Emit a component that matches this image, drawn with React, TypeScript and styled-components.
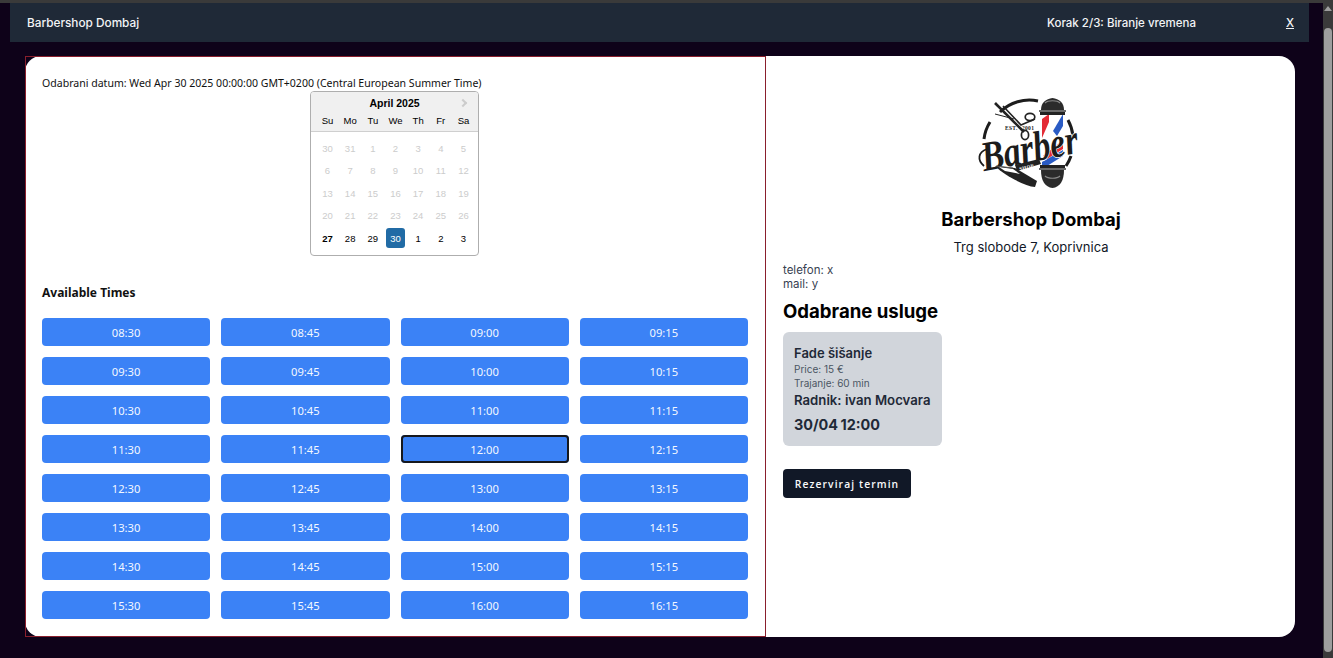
import React, { ReactElement } from "react";
import styled, { createGlobalStyle } from "styled-components";

const GlobalStyle = createGlobalStyle`
  html, body {
    margin: 0;
    padding: 0;
    height: 100%;
    overflow: hidden;
    background: #0e0219;
  }
  * {
    box-sizing: border-box;
  }
`;

const times = [
  "08:30", "08:45", "09:00", "09:15",
  "09:30", "09:45", "10:00", "10:15",
  "10:30", "10:45", "11:00", "11:15",
  "11:30", "11:45", "12:00", "12:15",
  "12:30", "12:45", "13:00", "13:15",
  "13:30", "13:45", "14:00", "14:15",
  "14:30", "14:45", "15:00", "15:15",
  "15:30", "15:45", "16:00", "16:15",
];

const dayNames = ["Su", "Mo", "Tu", "We", "Th", "Fr", "Sa"];

const days = [
  30, 31, 1, 2, 3, 4, 5,
  6, 7, 8, 9, 10, 11, 12,
  13, 14, 15, 16, 17, 18, 19,
  20, 21, 22, 23, 24, 25, 26,
  27, 28, 29, 30, 1, 2, 3,
];

function Logo() {
  return (
    <LogoSvg width="112" height="98" viewBox="0 0 112 98">
      <defs>
        <clipPath id="pole">
          <rect x="67" y="23" width="21" height="50" />
        </clipPath>
      </defs>
      {/* ring */}
      <path d="M25 20 A42 42 0 0 1 63 9" fill="none" stroke="#1c1c1c" strokeWidth="3" />
      <path d="M9 47 A42 42 0 0 1 15 30" fill="none" stroke="#1c1c1c" strokeWidth="3" />
      <path d="M93 28 A42 42 0 0 1 98 44" fill="none" stroke="#1c1c1c" strokeWidth="3" />
      <path d="M96 64 A42 42 0 0 1 91 74" fill="none" stroke="#1c1c1c" strokeWidth="3" />
      {/* scissors */}
      <path d="M20 11 L49 40" stroke="#222" strokeWidth="2.6" />
      <path d="M28 14 L46 33 L60 27" fill="none" stroke="#222" strokeWidth="1.6" />
      <path d="M20 22 L39 27" stroke="#222" strokeWidth="1" />
      <ellipse cx="55" cy="25" rx="4.8" ry="3.6" fill="none" stroke="#222" strokeWidth="1.7" />
      <ellipse cx="50" cy="43" rx="3.6" ry="4.6" fill="none" stroke="#222" strokeWidth="1.7" />
      <text x="30" y="38" fontFamily="'Liberation Serif', serif" fontSize="5.5" fontWeight="700" fill="#222" letterSpacing="0.3">
        EST.
      </text>
      <text x="47" y="38" fontFamily="'Liberation Serif', serif" fontSize="5.5" fontWeight="700" fill="#222" letterSpacing="0.3">
        2001
      </text>
      {/* barber pole */}
      <path d="M66 18 C66 10 71 7 77.5 6 C84 7 89 10 89 18 Z" fill="#2b2b2b" />
      <path d="M70 11 C73 8 82 8 85 11" fill="none" stroke="#8a8a8a" strokeWidth="1.2" />
      <rect x="64" y="18" width="27" height="2" fill="#6a6a6a" />
      <rect x="65" y="20" width="25" height="3" fill="#222" />
      <rect x="67" y="23" width="21" height="50" fill="#fff" />
      <g clipPath="url(#pole)">
        <path d="M67 27 L74 22 L74 30 L67 46 Z" fill="#e32b35" />
        <path d="M78 39 L88 22 L88 34 L82 44 Z" fill="#2a5bc4" />
        <path d="M68 64 L88 48 L88 57 L72 67 Z" fill="#e32b35" />
        <path d="M67 70 L88 58 L88 64 L72 74 L67 74 Z" fill="#2a5bc4" />
      </g>
      <rect x="65" y="73" width="25" height="3" fill="#222" />
      <rect x="64" y="76" width="27" height="2" fill="#6a6a6a" />
      <path d="M66 78 L89 78 C89 89 85 95 77.5 96 C70 95 66 89 66 78 Z" fill="#2b2b2b" />
      <path d="M70 84 C73 87 82 87 85 84" fill="none" stroke="#8a8a8a" strokeWidth="1.2" />
      {/* wordmark */}
      <text
        x="6"
        y="71"
        fontFamily="'Liberation Serif', serif"
        fontSize="42"
        fontWeight="700"
        fontStyle="italic"
        fill="#1c1c1c"
        stroke="#fff"
        strokeWidth="1.4"
        paintOrder="stroke"
        textLength="98"
        lengthAdjust="spacingAndGlyphs"
        transform="rotate(-11 50 60)"
      >
        Barber
      </text>
      <path d="M9 74 C2 68 3 60 12 57" fill="none" stroke="#1c1c1c" strokeWidth="1.8" />
      {/* shop ribbon and razor */}
      <path d="M40 73 L64 67 L66 72 L42 79 Z" fill="#222" />
      <text x="44" y="77" fontFamily="'Liberation Serif', serif" fontSize="5" fontWeight="700" fill="#fff" transform="rotate(-13 52 75)" letterSpacing="0.4">
        SHOP
      </text>
      <path d="M20 74 L40 76 L62 89 L60 95 C50 94 30 84 20 74 Z" fill="#222" />
      <path d="M24 75 L38 77 L45 82 L30 79 Z" fill="#fff" />
      <path d="M21 74 L38 76" stroke="#555" strokeWidth="1" />
    </LogoSvg>
  );
}

export default function App(): ReactElement {
  return (
    <>
      <GlobalStyle />
      <Page>
        <Main>
          <TopBar>
            <BrandName>Barbershop Dombaj</BrandName>
            <StepGroup>
              <span>Korak 2/3: Biranje vremena</span>
              <CloseLink>X</CloseLink>
            </StepGroup>
          </TopBar>
          <Card>
            <LeftPane>
              <DateText>
                Odabrani datum: Wed Apr 30 2025 00:00:00 GMT+0200 (Central European Summer Time)
              </DateText>
              <Calendar>
                <CalendarHeader>
                  <MonthTitle>April 2025</MonthTitle>
                  <NextMonth />
                  <DayGrid>
                    {dayNames.map((d) => (
                      <DayName key={d}>{d}</DayName>
                    ))}
                  </DayGrid>
                </CalendarHeader>
                <DayRows>
                  {days.map((d, i) => (
                    <Day
                      key={i}
                      $disabled={i < 28}
                      $today={i === 28}
                      $selected={i === 31}
                    >
                      {d}
                    </Day>
                  ))}
                </DayRows>
              </Calendar>
              <TimesTitle>Available Times</TimesTitle>
              <TimeGrid>
                {times.map((t) => (
                  <TimeButton key={t} $focused={t === "12:00"}>
                    {t}
                  </TimeButton>
                ))}
              </TimeGrid>
            </LeftPane>
            <RightPane>
              <LogoWrap>
                <Logo />
              </LogoWrap>
              <ShopName>Barbershop Dombaj</ShopName>
              <Address>Trg slobode 7, Koprivnica</Address>
              <ContactBlock>
                <div>telefon: x</div>
                <div>mail: y</div>
              </ContactBlock>
              <SectionTitle>Odabrane usluge</SectionTitle>
              <ServiceCard>
                <ServiceName>Fade šišanje</ServiceName>
                <ServiceMeta>Price: 15 €</ServiceMeta>
                <ServiceMeta>Trajanje: 60 min</ServiceMeta>
                <WorkerName>Radnik: ivan Mocvara</WorkerName>
                <ServiceTime>30/04 12:00</ServiceTime>
              </ServiceCard>
              <BookButton>Rezerviraj termin</BookButton>
            </RightPane>
          </Card>
        </Main>
        <ScrollRail>
          <ScrollArrow />
          <ScrollThumb />
        </ScrollRail>
      </Page>
    </>
  );
}

const Page = styled.div`
  display: flex;
  height: 100vh;
  border-top: 3px solid #3a3a3a;
  background: #0e0219;
`;

const Main = styled.div`
  flex: 1;
  min-width: 0;
  display: flex;
  flex-direction: column;
  padding: 0 14px 21px 10px;
`;

const TopBar = styled.header`
  height: 39px;
  flex: none;
  display: flex;
  align-items: center;
  justify-content: space-between;
  padding: 0 15px 0 17px;
  background: #1f2937;
  color: #f3f4f6;
  font-family: Inter, sans-serif;
  font-size: 11.5px;
  font-weight: 500;
`;

const BrandName = styled.span`
  font-size: 11.8px;
`;

const StepGroup = styled.div`
  display: flex;
  gap: 90px;
`;

const CloseLink = styled.span`
  text-decoration: underline;
`;

const Card = styled.main`
  flex: 1;
  display: flex;
  margin: 14px 14px 0 15px;
  background: #fff;
  border-radius: 16px;
`;

const LeftPane = styled.section`
  width: 741px;
  flex: none;
  padding: 18px 17px 0 16px;
  border: 1px solid #8a1f2d;
`;

const DateText = styled.div`
  font-family: "Noto Sans", sans-serif;
  font-size: 10.55px;
  line-height: 16px;
  color: #111;
`;

const Calendar = styled.div`
  width: 169px;
  height: 165px;
  margin-left: 268px;
  border: 1px solid #aeaeae;
  border-radius: 4px;
  background: #fff;
  font-family: "Liberation Sans", Arial, sans-serif;
  font-size: 9.5px;
  color: #000;
  overflow: hidden;
`;

const CalendarHeader = styled.div`
  position: relative;
  height: 40px;
  background: #f0f0f0;
  border-bottom: 1px solid #cfcfcf;
`;

const MonthTitle = styled.div`
  padding-top: 5px;
  text-align: center;
  font-size: 10.5px;
  line-height: 13px;
  font-weight: 700;
`;

const NextMonth = styled.span`
  position: absolute;
  top: 8px;
  right: 12px;
  width: 6px;
  height: 6px;
  border-top: 2px solid #ccc;
  border-right: 2px solid #ccc;
  transform: rotate(45deg);
`;

const DayGrid = styled.div`
  display: grid;
  grid-template-columns: repeat(7, 19px);
  justify-content: space-between;
  padding: 5px 5px 0 7px;
`;

const DayName = styled.span`
  text-align: center;
  line-height: 11px;
`;

const DayRows = styled.div`
  display: grid;
  grid-template-columns: repeat(7, 19px);
  grid-auto-rows: 20px;
  row-gap: 2.5px;
  justify-content: space-between;
  padding: 6px 5px 0 7px;
`;

const Day = styled.span<{ $disabled?: boolean; $today?: boolean; $selected?: boolean }>`
  display: flex;
  align-items: center;
  justify-content: center;
  border-radius: 3px;
  color: ${(p) => (p.$selected ? "#fff" : p.$disabled ? "#ccc" : "#000")};
  background: ${(p) => (p.$selected ? "#216ba5" : "transparent")};
  font-weight: ${(p) => (p.$today ? 700 : 400)};
`;

const TimesTitle = styled.h3`
  margin: 29px 0 17px;
  font-family: "Noto Sans", sans-serif;
  font-size: 12px;
  line-height: 16px;
  font-weight: 700;
  color: #111;
`;

const TimeGrid = styled.div`
  display: grid;
  grid-template-columns: repeat(4, 1fr);
  grid-auto-rows: 28px;
  column-gap: 11px;
  row-gap: 11px;
`;

const TimeButton = styled.button<{ $focused?: boolean }>`
  padding: 0;
  border: none;
  border-radius: 4px;
  background: #3b82f6;
  color: #f4f8ff;
  font-family: "Noto Sans", sans-serif;
  font-size: 11.2px;
  box-shadow: ${(p) => (p.$focused ? "inset 0 0 0 2px #16181d" : "none")};
`;

const RightPane = styled.section`
  flex: 1;
  min-width: 0;
  padding: 36px 16px 0 17px;
  font-family: Inter, sans-serif;
`;

const LogoWrap = styled.div`
  display: flex;
  justify-content: center;
  height: 114px;
`;

const LogoSvg = styled.svg`
  overflow: visible;
`;

const ShopName = styled.h2`
  margin: 0;
  text-align: center;
  font-size: 18.5px;
  line-height: 26px;
  font-weight: 700;
  color: #000;
`;

const Address = styled.p`
  margin: 6px 0 0;
  text-align: center;
  font-size: 13px;
  line-height: 18px;
  color: #111827;
`;

const ContactBlock = styled.div`
  margin-top: 7px;
  font-size: 11.5px;
  line-height: 14px;
  color: #374151;
`;

const SectionTitle = styled.h3`
  margin: 6px 0 0;
  font-size: 18.6px;
  line-height: 28px;
  font-weight: 700;
  color: #000;
`;

const ServiceCard = styled.div`
  width: 159px;
  height: 114px;
  margin-top: 7px;
  padding: 13px 11px 0;
  border-radius: 6px;
  background: #d1d5db;
`;

const ServiceName = styled.div`
  font-size: 13px;
  line-height: 17px;
  font-weight: 600;
  color: #1f2937;
  white-space: nowrap;
`;

const WorkerName = styled(ServiceName)`
  margin-top: 2px;
  font-size: 13.2px;
`;

const ServiceMeta = styled.div`
  font-size: 10px;
  line-height: 14px;
  color: #4b5563;
`;

const ServiceTime = styled.div`
  margin-top: 5px;
  font-size: 14.4px;
  line-height: 22px;
  font-weight: 700;
  word-spacing: -1px;
  color: #1f2937;
`;

const BookButton = styled.button`
  display: block;
  width: 128px;
  height: 29px;
  margin-top: 23px;
  padding: 0;
  border: none;
  border-radius: 4px;
  background: #111827;
  color: #f9fafb;
  font-family: "Open Sans", sans-serif;
  font-size: 10.3px;
  font-weight: 600;
  letter-spacing: 1.1px;
`;

const ScrollRail = styled.div`
  width: 10px;
  flex: none;
  margin-top: -3px;
  display: flex;
  flex-direction: column;
  align-items: center;
  background: #3a3a3a;
`;

const ScrollArrow = styled.span`
  margin-top: 6px;
  width: 0;
  height: 0;
  border-left: 4px solid transparent;
  border-right: 4px solid transparent;
  border-bottom: 5px solid #9e9e9e;
`;

const ScrollThumb = styled.span`
  width: 8px;
  height: 624px;
  margin-top: 17px;
  border-radius: 4px;
  background: #9e9e9e;
`;
